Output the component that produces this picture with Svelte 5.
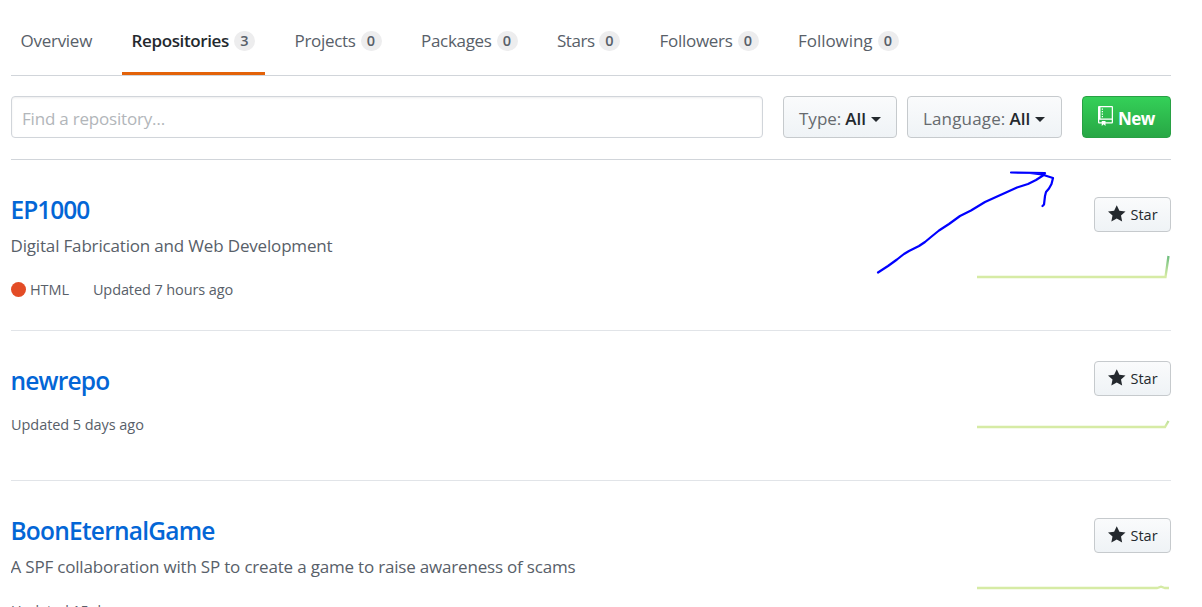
<script>
  const tabs = [
    { label: 'Overview', width: 91, track: -0.27 },
    { label: 'Repositories', count: 3, width: 143, active: true, track: -0.37 },
    { label: 'Projects', count: 0, width: 106.5, track: -0.3 },
    { label: 'Packages', count: 0, width: 116, track: -0.3 },
    { label: 'Stars', count: 0, width: 82.5, track: -0.45 },
    { label: 'Followers', count: 0, width: 118.5, track: -0.28 },
    { label: 'Following', count: 0, width: 120, track: -0.05 }
  ];
  const repos = [
    { name: 'EP1000', about: 'Digital Fabrication and Web Development', lang: 'HTML', updated: 'Updated 7 hours ago', line: '0,23 188.500,23 191.500,2', drop: 7, gap: 22, height: 171, nt: -1, at: -0.17, ut: -0.1 },
    { name: 'newrepo', updated: 'Updated 5 days ago', line: '0,23 188,23 191.500,17', drop: 0, gap: 8, height: 150, nt: -0.8, at: 0, ut: -0.06 },
    { name: 'BoonEternalGame', about: 'A SPF collaboration with SP to create a game to raise awareness of scams', updated: 'Updated 15 days ago', line: '0,23 180,23 184,21.7 188,23 192,23', drop: 7, gap: 12, height: 171, nt: -0.78, at: -0.19, ut: -0.13 }
  ];
</script>

<main>
  <nav>
    {#each tabs as t}
      <a class="tab" class:active={t.active} style:width="{t.width}px">
        <span style:letter-spacing="{t.track}px">{t.label}</span>
        {#if t.count !== undefined}<span class="count">{t.count}</span>{/if}
      </a>
    {/each}
  </nav>
  <div class="filters">
    <div class="search"><span>Find a repository…</span></div>
    <button class="select type"><span class="muted">Type:</span><span class="dark">All</span><i></i></button>
    <button class="select language"><span class="muted">Language:</span><span class="dark">All</span><i></i></button>
    <button class="new">
      <svg width="15" height="20" viewBox="0 0 12 16"><path fill="#fff" fill-rule="evenodd" d="M4 9H3V8h1v1zm0-3H3v1h1V6zm0-2H3v1h1V4zm0-2H3v1h1V2zm8-1v12c0 .55-.45 1-1 1H6v2l-1.500-1.500L3 16v-2H1c-.55 0-1-.45-1-1V1c0-.55.45-1 1-1h10c.55 0 1 .45 1 1zm-1 10H1v2h2v-1h3v1h5v-2zm0-10H2v9h9V1z"/></svg>
      <span>New</span>
    </button>
  </div>
  {#each repos as r}
    <section style:height="{r.height}px">
      <div class="info">
        <h3 style:letter-spacing="{r.nt}px">{r.name}</h3>
        {#if r.about}<p style:letter-spacing="{r.at}px">{r.about}</p>{/if}
        <div class="meta" class:tight={!r.about}>
          {#if r.lang}<b class="dot"></b><span class="lang">{r.lang}</span>{/if}
          <span style:letter-spacing="{r.ut}px">{r.updated}</span>
        </div>
      </div>
      <div class="side" style:padding-top="{r.drop}px">
        <button class="star">
          <svg width="17.500" height="20" viewBox="0 0 14 16"><path fill="#24292e" d="M14 6l-4.900-.64L7 1 4.900 5.360 0 6l3.600 3.260L2.670 14 7 11.670 11.330 14l-.93-4.740L14 6z"/></svg>
          <span>Star</span>
        </button>
        <svg class="graph" style:margin-top="{r.gap}px" width="194" height="26"><defs><linearGradient id="g-{r.name}" gradientUnits="userSpaceOnUse" x1="0" y1="24" x2="0" y2="0"><stop offset="0.08" stop-color="#d6eba5"/><stop offset="1" stop-color="#62b97a"/></linearGradient></defs><polyline points={r.line} fill="none" stroke="url(#g-{r.name})" stroke-width="2.300"/></svg>
      </div>
    </section>
  {/each}
  <svg class="arrow" width="190" height="115" viewBox="870 165 190 115" fill="none" stroke="#00f" stroke-width="2.200" stroke-linecap="round" stroke-linejoin="round">
    <path d="M878 272.500L888 266 897 259.500 904 254 909 251 919 246 925 242 931 237 939 230.500 949 224 960 216 971 210.500 985 202 996 197 1006 192.500 1017 187.500 1028 184 1036 180 1043 175.500 1045 173L1011 172.500M1030 173L1042 174.500 1053 178 1051.500 184 1049 188.500 1046 192 1045 196 1044 204.500 1042.500 206"/>
  </svg>
</main>

<style>
  :global(body) { background: #fff; overflow: hidden; }
  main { position: relative; width: 1160px; height: 607px; overflow: hidden; margin-left: 11px; font-family: "Open Sans", sans-serif; font-size: 17px; color: #586069; }
  main * { box-sizing: border-box; }
  svg { flex: none; }
  nav { display: flex; gap: 20px; height: 76px; border-bottom: 1px solid #d1d5da; }
  .tab { display: flex; align-items: center; justify-content: space-between; flex: none; padding: 8px 10px 0 9.500px; height: 75px; border-bottom: 3px solid transparent; white-space: nowrap; }
  .active { color: #24292e; font-weight: 550; border-color: #e36209; }
  .count { width: 21px; height: 20px; border-radius: 10px; background: #ededee; color: #586069; font-weight: 550; font-size: 14.500px; line-height: 20px; text-align: center; position: relative; top: .5px; }
  .filters { display: flex; height: 84px; padding: 20px 0 21px; border-bottom: 1px solid #d1d5da; }
  button { display: flex; align-items: center; font: 550 17px "Open Sans", sans-serif; border: 1px solid #c6cacd; border-radius: 4px; background: linear-gradient(#fafbfc, #eff3f6); white-space: nowrap; }
  .search { display: flex; align-items: center; width: 752px; margin-right: 20px; height: 42px; border: 1px solid #d1d5da; border-radius: 4px; padding: 3px 10px 0; box-shadow: inset 0 1px 2px rgba(27,31,35,.075); color: #b2b6ba; letter-spacing: -.2px; }
  .select { height: 42px; padding: 3px 15px 0; gap: 4px; font-weight: 500; }
  .type { width: 114px; margin-right: 10px; }
  .language { width: 155px; margin-right: 20px; }
  .muted { color: #666a6e; }
  .language .muted { letter-spacing: .15px; }
  .dark { color: #24292e; font-weight: 550; }
  i { margin: 2px 0 0 1px; border: 5px solid transparent; border-top-color: #24292e; border-bottom: 0; }
  .new { width: 89px; height: 42px; padding: 0 15px; gap: 5px; color: #fff; font-weight: 700; letter-spacing: -.5px; border-color: #28a044; background: linear-gradient(#34d058, #28a745); }
  .new svg { margin-bottom: 2px; }
  .new span { padding-top: 2px; }
  section { display: flex; justify-content: space-between; padding-top: 30px; border-bottom: 1px solid #e1e4e8; }
  h3 { margin: 1px 0 0 -.5px; font-size: 24.500px; font-weight: 550; line-height: 38px; color: #0366d6; }
  p { margin: 4px 0 0 -.5px; line-height: 26px; }
  .meta { display: flex; align-items: center; font-size: 14.500px; line-height: 22px; margin-top: 20px; }
  .tight { margin-top: 14px; }
  .dot { width: 15px; height: 15px; border-radius: 50%; background: #e34c26; margin: -2px 4px 0 0; }
  .lang { margin-right: 24px; letter-spacing: -.1px; }
  .side { display: flex; flex-direction: column; align-items: flex-end; }
  .star { width: 77px; height: 35px; padding: 0 13px 1px; gap: 5px; font-size: 14.500px; font-weight: 500; color: #24292e; }
  .arrow { position: absolute; left: 859px; top: 165px; }
</style>
